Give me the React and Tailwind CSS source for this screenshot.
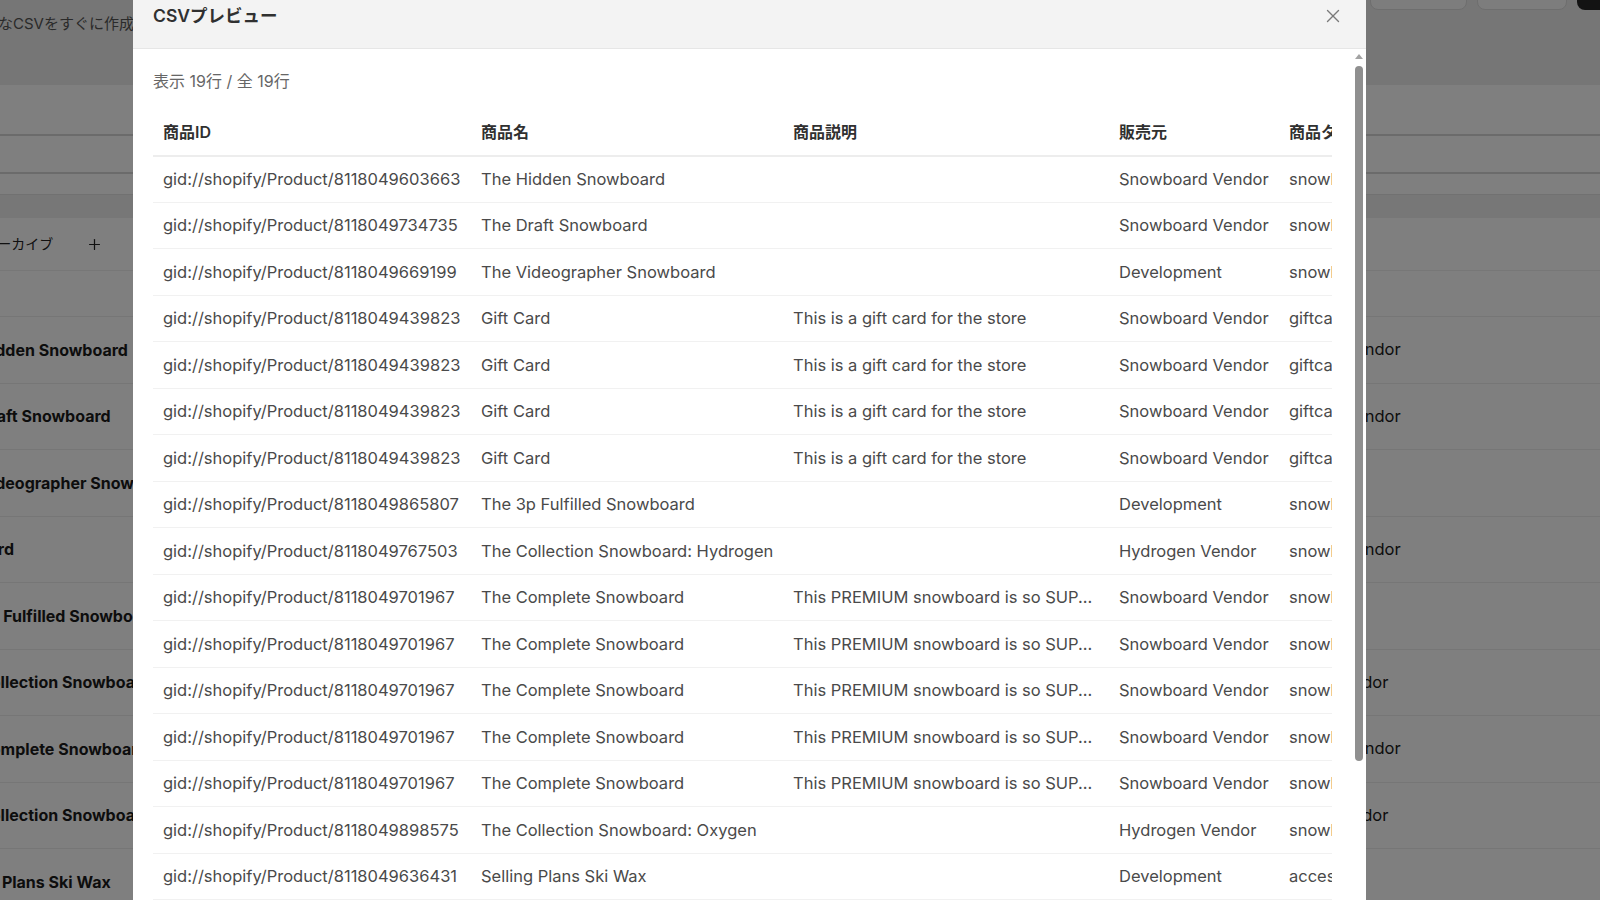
import React from 'react'
import { X, Plus } from 'lucide-react'

const GIFT = { id: '8118049439823', name: 'Gift Card', desc: 'This is a gift card for the store', vendor: 'Snowboard Vendor', type: 'giftcard' }
const COMPLETE = { id: '8118049701967', name: 'The Complete Snowboard', desc: 'This PREMIUM snowboard is so SUP...', vendor: 'Snowboard Vendor', type: 'snowboard' }

const ROWS = [
  { id: '8118049603663', name: 'The Hidden Snowboard', desc: '', vendor: 'Snowboard Vendor', type: 'snowboard' },
  { id: '8118049734735', name: 'The Draft Snowboard', desc: '', vendor: 'Snowboard Vendor', type: 'snowboard' },
  { id: '8118049669199', name: 'The Videographer Snowboard', desc: '', vendor: 'Development', type: 'snowboard' },
  GIFT, GIFT, GIFT, GIFT,
  { id: '8118049865807', name: 'The 3p Fulfilled Snowboard', desc: '', vendor: 'Development', type: 'snowboard' },
  { id: '8118049767503', name: 'The Collection Snowboard: Hydrogen', desc: '', vendor: 'Hydrogen Vendor', type: 'snowboard' },
  COMPLETE, COMPLETE, COMPLETE, COMPLETE, COMPLETE,
  { id: '8118049898575', name: 'The Collection Snowboard: Oxygen', desc: '', vendor: 'Hydrogen Vendor', type: 'snowboard' },
  { id: '8118049636431', name: 'Selling Plans Ski Wax', desc: '', vendor: 'Development', type: 'accessories' },
  { id: '8118049636431', name: 'Selling Plans Ski Wax', desc: '', vendor: 'Development', type: 'accessories' },
  { id: '8118049636431', name: 'Selling Plans Ski Wax', desc: '', vendor: 'Development', type: 'accessories' },
  { id: '8118049833039', name: 'The Multi-managed Snowboard', desc: '', vendor: 'Multi-managed Vendor', type: 'snowboard' },
]

// products list of the page behind the dialog
const PAGE_ROWS = [
  { name: 'The Hidden Snowboard', vendor: 'Snowboard Vendor' },
  { name: 'The Draft Snowboard', vendor: 'Snowboard Vendor' },
  { name: 'The Videographer Snowboard', vendor: 'Development' },
  { name: 'Gift Card', vendor: 'Snowboard Vendor' },
  { name: 'The 3p Fulfilled Snowboard', vendor: 'Development' },
  { name: 'The Collection Snowboard: Hydrogen', vendor: 'Hydrogen Vendor' },
  { name: 'The Complete Snowboard', vendor: 'Snowboard Vendor' },
  { name: 'The Collection Snowboard: Oxygen', vendor: 'Hydrogen Vendor' },
  { name: 'Selling Plans Ski Wax', vendor: 'Development' },
]

const COLUMNS = [
  { key: 'id', label: '商品ID', width: 'w-[318px]' },
  { key: 'name', label: '商品名', width: 'w-[312px]' },
  { key: 'desc', label: '商品説明', width: 'w-[326px]' },
  { key: 'vendor', label: '販売元', width: 'w-[170px]' },
  { key: 'type', label: '商品タイプ', width: 'w-[200px]' },
]

function BackgroundPage() {
  return (
    <div className="w-[1600px] h-[900px] overflow-hidden bg-white text-[#1a1a1a]">
      {/* header */}
      <div className="h-[85px] flex flex-col bg-[#ececec]">
        <div className="flex justify-end gap-[10px] -mt-[28px] h-[38px] shrink-0">
          <div className="w-[97px] rounded-lg border border-[#dcdcdc] bg-[#fafafa]" />
          <div className="w-[90px] rounded-lg border border-[#dcdcdc] bg-[#fafafa]" />
          <div className="w-[80px] -mr-[57px] rounded-lg bg-[#262626]" />
        </div>
        <div className="-ml-[32px] mt-[2px] text-[15px] leading-6 text-[#555] whitespace-nowrap">
          必要なCSVをすぐに作成できます
        </div>
      </div>
      <div className="h-[51px] border-b-2 border-[#d6d6d6]" />
      <div className="h-[38px] border-b-2 border-[#d6d6d6]" />
      <div className="h-[20px]" />
      <div className="h-[24px] bg-[#efefef] border-t border-[#e2e2e2]" />
      <div className="h-[53px] flex items-center border-b border-[#eeeeee]">
        <span className="-ml-[16px] text-[14px] leading-5 text-[#222] whitespace-nowrap">アーカイブ</span>
        <Plus size={17} strokeWidth={1.75} className="ml-[33px] text-[#222]" />
      </div>
      <div className="h-[46px] border-b border-[#ececec]" />
      {PAGE_ROWS.map((r, i) => (
        <div key={i} className="h-[66.5px] flex items-center border-b border-[#ececec] whitespace-nowrap">
          <span className="-ml-[55px] w-[1306px] shrink-0 text-[16px] font-bold">{r.name}</span>
          <span className="text-[16.5px]">{r.vendor}</span>
        </div>
      ))}
    </div>
  )
}

function Scrollbar() {
  return (
    <div className="w-[14px] shrink-0 flex flex-col items-center pt-[5px]">
      <div className="w-0 h-0 border-x-[4px] border-b-[5px] border-x-transparent border-b-[#a3a3a3]" />
      <div className="mt-[7px] w-[8px] h-[695px] rounded-full bg-[#8f8f8f]" />
    </div>
  )
}

export default function App() {
  return (
    <div className="relative w-[1600px] h-[900px] overflow-hidden font-['Inter','Noto_Sans_CJK_JP',sans-serif]">
      <BackgroundPage />

      {/* dialog overlay */}
      <div className="fixed inset-0 bg-black/50">
        <div className="ml-[133px] w-[1233px] h-full bg-white flex flex-col">
          <div className="h-[49px] shrink-0 bg-[#f3f3f3] border-b border-[#e6e6e6] flex items-start justify-between pl-5 pr-[21px] pt-[4px]">
            <h2 className="text-[17.5px] leading-6 font-semibold text-[#303030]">CSVプレビュー</h2>
            <button className="w-[24px] h-[24px] flex items-center justify-center text-[#7a7a7a]">
              <X size={22} strokeWidth={1.5} />
            </button>
          </div>

          <div className="flex-1 min-h-0 flex">
            <div className="flex-1 min-w-0 overflow-hidden px-5 pt-5">
              <div className="text-[16px] leading-6 text-[#666]">表示 19行 / 全 19行</div>
              <div className="mt-4 overflow-hidden">
                <table className="table-fixed border-collapse w-[1326px] text-[16.5px] leading-6">
                  <colgroup>
                    {COLUMNS.map(c => <col key={c.key} className={c.width} />)}
                  </colgroup>
                  <thead>
                    <tr className="h-[46.5px]">
                      {COLUMNS.map(c => (
                        <th key={c.key} className="px-[10px] text-left text-[16px] font-semibold text-[#303030] whitespace-nowrap overflow-hidden border-b-2 border-[#ededed]">
                          {c.label}
                        </th>
                      ))}
                    </tr>
                  </thead>
                  <tbody>
                    {ROWS.map((r, i) => (
                      <tr key={i} className="h-[46.5px]">
                        <td className="px-[10px] text-[#4a4a4a] whitespace-nowrap overflow-hidden border-b border-[#f1f1f1]">gid://shopify/Product/{r.id}</td>
                        <td className="px-[10px] text-[#4a4a4a] whitespace-nowrap overflow-hidden border-b border-[#f1f1f1]">{r.name}</td>
                        <td className="px-[10px] text-[#4a4a4a] whitespace-nowrap overflow-hidden border-b border-[#f1f1f1]">{r.desc}</td>
                        <td className="px-[10px] text-[#4a4a4a] whitespace-nowrap overflow-hidden border-b border-[#f1f1f1]">{r.vendor}</td>
                        <td className="px-[10px] text-[#4a4a4a] whitespace-nowrap overflow-hidden border-b border-[#f1f1f1]">{r.type}</td>
                      </tr>
                    ))}
                  </tbody>
                </table>
              </div>
            </div>
            <Scrollbar />
          </div>
        </div>
      </div>
    </div>
  )
}
